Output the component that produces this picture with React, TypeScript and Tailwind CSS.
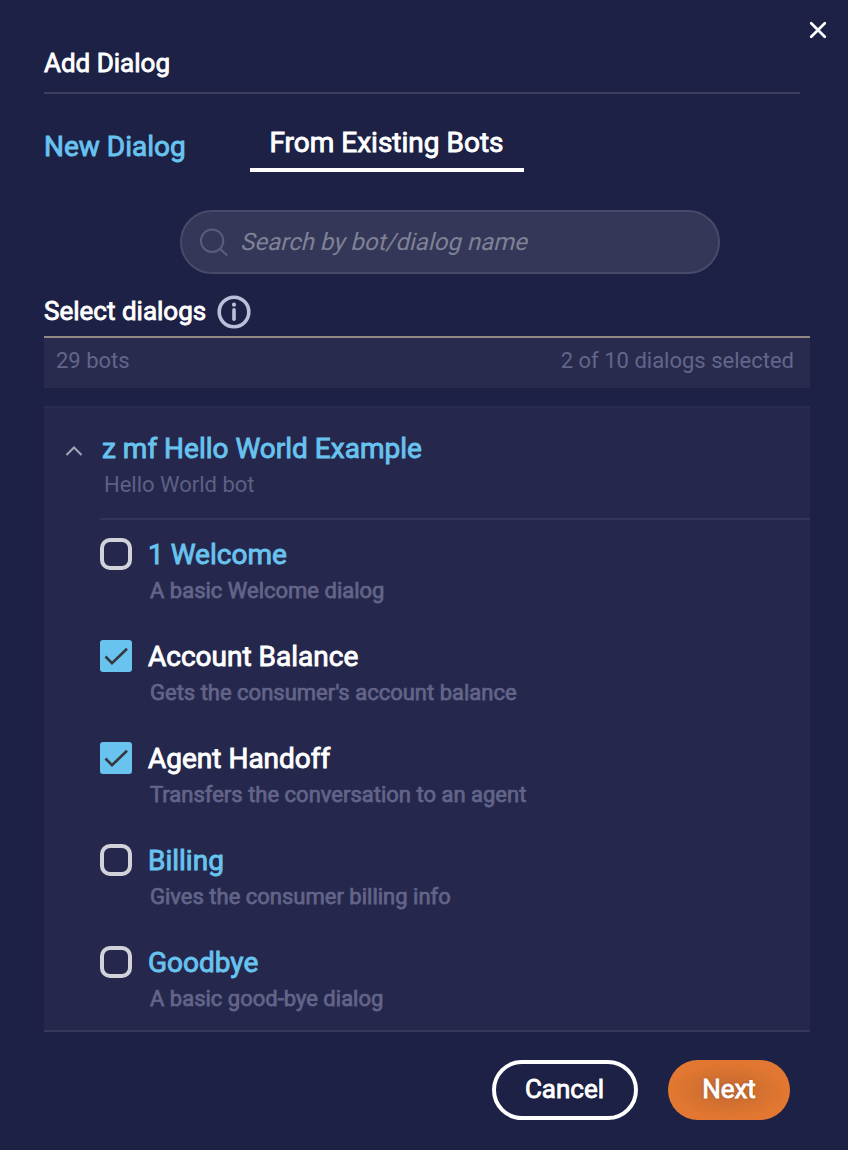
type Dialog = { name: string; description: string; selected: boolean };

const dialogs: Dialog[] = [
  { name: "1 Welcome", description: "A basic Welcome dialog", selected: false },
  { name: "Account Balance", description: "Gets the consumer's account balance", selected: true },
  { name: "Agent Handoff", description: "Transfers the conversation to an agent", selected: true },
  { name: "Billing", description: "Gives the consumer billing info", selected: false },
  { name: "Goodbye", description: "A basic good-bye dialog", selected: false },
];

function Checkbox({ checked }: { checked: boolean }) {
  if (!checked) {
    return <span className="size-8 shrink-0 rounded-[10px] border-4 border-[#d2d3da]" />;
  }
  return (
    <span className="size-8 shrink-0 rounded-[3px] bg-[#68c3ef]">
      <svg viewBox="0 0 32 32" className="size-8" fill="none" stroke="#36383f" strokeWidth="2.6">
        <path d="M5.5 16.5L12 23.2L27 8.7" />
      </svg>
    </span>
  );
}

function DialogRow({ dialog }: { dialog: Dialog }) {
  return (
    <li className="flex h-[102px] gap-4 pt-[18px]">
      <Checkbox checked={dialog.selected} />
      <div className="pt-px">
        <div
          className={
            dialog.selected
              ? "text-[28px] leading-8 text-white [-webkit-text-stroke:0.9px]"
              : "text-[28px] leading-8 text-[#68c3ef] [-webkit-text-stroke:0.9px]"
          }
        >
          {dialog.name}
        </div>
        <div className="mt-1 pl-[2px] text-[22px] leading-8 text-[#636489] [-webkit-text-stroke:0.75px]">
          {dialog.description}
        </div>
      </div>
    </li>
  );
}

export default function App() {
  return (
    <div className="flex h-[1150px] w-[848px] flex-col bg-[#1c2145] pl-11 font-[Roboto,sans-serif] whitespace-nowrap text-white">
      <div className="flex h-[45px] justify-end pt-[21px] pr-[21px]">
        <svg viewBox="0 0 18 18" className="size-[18px]" fill="none" stroke="#fff" strokeWidth="2.7" strokeLinecap="round">
          <path d="M2.2 2.2L15.8 15.8M15.8 2.2L2.2 15.8" />
        </svg>
      </div>
      <header className="h-[49px] w-[756px] border-b-2 border-[#3c3f5e] text-[26px] leading-9 [-webkit-text-stroke:0.85px]">
        Add Dialog
      </header>

      <nav className="flex h-[78px] text-[28px] leading-8 [-webkit-text-stroke:0.9px]">
        <div className="w-[206px] pt-[37px] text-[#68c3ef]">New Dialog</div>
        <div className="w-[274px] border-b-4 border-white pt-[33px] pl-[19.5px]">From Existing Bots</div>
      </nav>

      <div className="mt-[38px] ml-[136px] flex h-16 w-[540px] shrink-0 items-center rounded-full border-2 border-[#484a69] bg-[#343757] pl-[17px]">
        <svg viewBox="0 0 30 30" className="size-[30px] shrink-0" fill="none" stroke="#5b5d7a" strokeWidth="2">
          <circle cx="13.1" cy="13.8" r="11.2" />
          <path d="M20.8 21.6L28.3 28.6" />
        </svg>
        <span className="ml-[11px] inline-block origin-[0_24px] -skew-x-[14deg] text-[24px] leading-8 text-[#7f8196]">
          Search by bot/dialog name
        </span>
      </div>

      <div className="mt-[19px] flex h-[43px] items-start gap-[11px] text-[26px] leading-9 [-webkit-text-stroke:0.85px]">
        <span>Select dialogs</span>
        <svg viewBox="0 0 34 34" className="mt-[2px] size-[34px]" fill="none" stroke="#b9c1d8">
          <circle cx="17" cy="17" r="14.8" strokeWidth="3.6" />
          <path d="M17 14.9V24.3" strokeWidth="3.6" strokeLinecap="round" />
          <circle cx="17" cy="9.7" r="2.1" fill="#b9c1d8" stroke="none" />
        </svg>
      </div>
      <div className="flex h-[52px] w-[766px] shrink-0 justify-between border-t-2 border-[#908885] bg-[#282b4e] pt-[7px] pr-4 pl-3 text-[22px] leading-8 text-[#63668a]">
        <span>29 bots</span>
        <span>2 of 10 dialogs selected</span>
      </div>

      <section className="mt-[18px] h-[626px] w-[766px] shrink-0 border-t-2 border-b-2 border-t-[#292d50] border-b-[#353759] bg-[#25284c]">
        <div className="flex h-[110px] pl-[21px]">
          <svg viewBox="0 0 18 12" className="mt-[37px] mr-[19px] h-3 w-[18px]" fill="none" stroke="#a5a6b5" strokeWidth="2">
            <path d="M1.5 10L9 2.5L16.5 10" />
          </svg>
          <div className="pt-[25px]">
            <div className="text-[28px] leading-8 text-[#68c3ef] [-webkit-text-stroke:0.9px]">z mf Hello World Example</div>
            <div className="mt-1 pl-[2px] text-[22px] leading-8 text-[#5e6084]">Hello World bot</div>
          </div>
        </div>
        <ul className="ml-14 border-t-2 border-[#333659]">
          {dialogs.map((dialog) => (
            <DialogRow key={dialog.name} dialog={dialog} />
          ))}
        </ul>
      </section>

      <footer className="mt-7 flex gap-[30px] pl-[448px] text-[26px] [-webkit-text-stroke:0.85px]">
        <button className="h-[60px] w-[146px] rounded-full border-4 border-white pr-px pb-[2px] [text-shadow:0_0_2px_rgba(0,0,0,0.4)]">
          Cancel
        </button>
        <button className="h-[60px] w-[122px] rounded-full bg-[radial-gradient(ellipse_at_center,#c76b32_0%,#cf6e31_25%,#e17730_65%)] pb-[2px] [text-shadow:0_0_3px_rgba(0,0,0,0.35)]">
          Next
        </button>
      </footer>
    </div>
  );
}
